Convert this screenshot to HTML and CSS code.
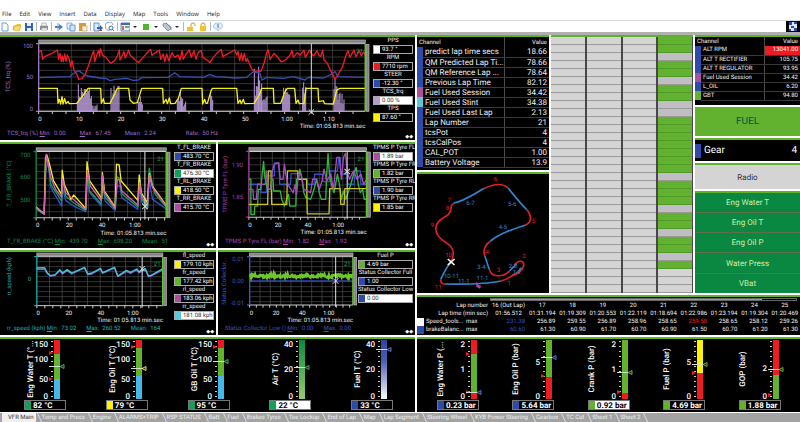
FILE: index.html
```html
<!DOCTYPE html>
<html lang="en">
<head>
    <meta charset="UTF-8">
    <meta name="viewport" content="width=device-width, initial-scale=1.0">
    <title>VFR Main</title>
    <link rel="stylesheet" href="styles.css">
</head>
<body>
    <nav class="menu">
        <a href="#">File</a><a href="#">Edit</a><a href="#">View</a><a href="#">Insert</a><a href="#">Data</a><a href="#">Display</a><a href="#">Map</a><a href="#">Tools</a><a href="#">Window</a><a href="#">Help</a>
    </nav>

    <div class="toolbar">
        <button aria-label="New"><svg viewBox="0 0 10 10"><path d="M2 1h4l2 2v6H2z" fill="#f4f9ff" stroke="#6f9fd8"/></svg></button>
        <button aria-label="Open"><svg viewBox="0 0 10 10"><path d="M1 8V4l3-1 1-1h4l-1 6z" fill="#f0c030"/><path d="M1 8l2-4h6L7 9z" fill="#f8e070" stroke="#c89820" stroke-width=".5"/></svg></button>
        <button aria-label="Save"><svg viewBox="0 0 10 10"><path d="M1 1h8v8H1z" fill="#2f62b8"/><path d="M3 1h4v3H3zM3 6h4v3H3z" fill="#e6effa"/></svg></button>
        <i class="sep"></i>
        <button aria-label="Print"><svg viewBox="0 0 10 10"><path d="M3 1h4l1 3H2z" fill="#eee" stroke="#999" stroke-width=".6"/><path d="M1 4h8v4H1z" fill="#8a8f98"/><path d="M3 6h5v3H2z" fill="#ddd"/></svg></button>
        <i class="sep"></i>
        <button aria-label="Cut"><svg viewBox="0 0 10 10"><path d="M1 4h4V2l4 3-4 3V6H1z" fill="#3f7ec4"/><path d="M4 1v8" stroke="#7b9cc0"/></svg></button>
        <button aria-label="Copy"><svg viewBox="0 0 10 10"><path d="M1 1h5v6H1z" fill="#e8f1fc" stroke="#6f9fd8" stroke-width=".8"/><path d="M4 3h5v6H4z" fill="#d4e6fa" stroke="#4f86c8" stroke-width=".8"/></svg></button>
        <button aria-label="Paste"><svg viewBox="0 0 10 10"><path d="M1 1h7v8H1z" fill="#dd9a38"/><path d="M4 4h5v5H4z" fill="#fff3dc" stroke="#a9742c" stroke-width=".5"/></svg></button>
        <i class="sep"></i>
        <button aria-label="Export"><svg viewBox="0 0 10 10"><path d="M1 1h5v8H1z" fill="#dceafa" stroke="#3f74b8" stroke-width=".8"/><path d="M4 5h3V3l3 3-3 3V7H4z" fill="#2b5fae"/><path d="M6 8h3v1H6z" fill="#d33"/></svg></button>
        <button aria-label="Find"><svg viewBox="0 0 10 10"><path d="M8 3A4 4 0 1 0 5 8" fill="none" stroke="#6d9bcd"/><circle cx="6" cy="6" r="2" fill="#fff" stroke="#3d6cb0"/><path d="M7 7l2 2" stroke="#3d6cb0"/></svg></button>
        <i class="sep"></i>
        <button aria-label="Layout"><svg viewBox="0 0 10 10"><path d="M1 1h9v8H1z" fill="#e8eefc" stroke="#4866a8" stroke-width=".8"/><path d="M1 1h9v2H1z" fill="#4866a8"/><path d="M2 4h2v4H2z" fill="#d86a4a"/><path d="M5 4h4v2H5z" fill="#72b35a"/></svg></button>
        <span class="caret"></span>
        <button aria-label="Colour"><svg viewBox="0 0 10 10"><path d="M2 2h6v6H2z" fill="#4db82a"/></svg></button>
        <span class="caret"></span>
        <button aria-label="Tags"><svg viewBox="0 0 10 10"><path d="M1 2l3-1 5 5-3 3-5-5z" fill="#b9c6d8" stroke="#5f7492" stroke-width=".7"/><path d="M4 1l5 4v3" fill="none" stroke="#5f7492" stroke-width=".7"/></svg></button>
        <span class="caret"></span>
        <i class="sep"></i>
        <button aria-label="Unlock"><svg viewBox="0 0 10 10"><path d="M5 5V3a2 2 0 0 1 4 0v1" fill="none" stroke="#c89a20"/><path d="M1 5h6v4H1z" fill="#f2c22e"/></svg></button>
        <button aria-label="Lock"><svg viewBox="0 0 10 10"><path d="M3 5V3a2 2 0 0 1 4 0v2" fill="none" stroke="#c89a20"/><path d="M2 4h6v5H2z" fill="#f2c22e"/></svg></button>
        <i class="sep"></i>
        <button aria-label="About"><svg viewBox="0 0 10 10"><path d="M5 1a4 3 0 0 1 1 6L5 9 4 7a4 3 0 0 1 1-6z" fill="#dff0fb" stroke="#8cb8d8" stroke-width=".7"/><path d="M5 2v4" stroke="#2f72b8"/></svg></button>
        <button class="tiles" aria-label="Tiles"><svg viewBox="0 0 14 11"><path d="M3 1h8v9H3z" fill="#dde4f8"/><path d="M3 1h3v3H3zM8 1h3v2H8zM5 5h3v2H5zM8 7h3v3H8zM3 8h2v2H3z" fill="#2d48a8"/></svg></button>
    </div>

    <main class="workspace">
        <div class="left">
            <section class="panel chart">
                <svg id="chart-tcs"></svg>
                <div class="stats spread purple"><span>TCS_trq (%) <u>M</u>in:&nbsp; 0.00</span><span><u>M</u>ax:&nbsp; 67.45</span><span>Mean:&nbsp; 2.24</span><span class="rate">Rate:&nbsp; 50 Hz</span></div>
                <div class="legend">
                    <div>PPS</div><p><i class="white"></i>93.7 °</p>
                    <div>RPM</div><p><i class="red"></i>7710 rpm</p>
                    <div>STEER</div><p><i class="blue"></i>-12.30 °</p>
                    <div>TCS_trq</div><p class="on"><i class="lilac"></i>0.00 %</p>
                    <div>TPS</div><p><i class="yellow"></i>87.60 °</p>
                </div>
            </section>
            <div class="pair">
                <section class="panel chart">
                    <svg id="chart-brake"></svg>
                    <div class="stats green-text"><span>T_FR_BRAKE (°C) <u>M</u>in:&nbsp; 439.70</span><span><u>M</u>ax:&nbsp; 698.20</span><span>Mean:&nbsp; 51</span></div>
                    <div class="legend">
                        <div>T_FL_BRAKE</div><p><i class="blue"></i>483.70 °C</p>
                        <div>T_FR_BRAKE</div><p class="on"><i class="emerald"></i>476.30 °C</p>
                        <div>T_RL_BRAKE</div><p><i class="yellow"></i>418.50 °C</p>
                        <div>T_RR_BRAKE</div><p><i class="magenta"></i>415.70 °C</p>
                    </div>
                </section>
                <section class="panel chart">
                    <svg id="chart-tpms"></svg>
                    <div class="stats magenta-text"><span>TPMS P Tyre FL (bar) <u>M</u>in:&nbsp; 1.82</span><span><u>M</u>ax:&nbsp; 1.92</span></div>
                    <div class="legend">
                        <div>TPMS P Tyre FL</div><p class="on"><i class="magenta"></i>1.89 bar</p>
                        <div>TPMS P Tyre FR</div><p><i class="green"></i>1.82 bar</p>
                        <div>TPMS P Tyre RL</div><p><i class="blue"></i>1.90 bar</p>
                        <div>TPMS P Tyre RR</div><p><i class="yellow"></i>1.85 bar</p>
                    </div>
                </section>
            </div>
            <div class="pair">
                <section class="panel chart">
                    <svg id="chart-speed"></svg>
                    <div class="stats cyan-text"><span>rr_speed (kph) <u>M</u>in:&nbsp; 73.02</span><span><u>M</u>ax:&nbsp; 260.52</span><span>Mean:&nbsp; 164</span></div>
                    <div class="legend">
                        <div>fl_speed</div><p><i class="yellow"></i>179.10 kph</p>
                        <div>fr_speed</div><p><i class="green"></i>177.42 kph</p>
                        <div>rl_speed</div><p><i class="magenta"></i>183.06 kph</p>
                        <div>rr_speed</div><p class="on"><i class="cyan"></i>181.08 kph</p>
                    </div>
                </section>
                <section class="panel chart wide">
                    <svg id="chart-status"></svg>
                    <div class="stats blue-text"><span>Status Collector Low () <u>M</u>in:&nbsp; 0.00</span><span><u>M</u>ax:&nbsp; 0.00</span></div>
                    <div class="legend">
                        <div>Fuel P</div><p><i class="green"></i>4.69 bar</p>
                        <div>Status Collector Full</div><p><i class="blue"></i>1.00</p>
                        <div>Status Collector Low</div><p class="on"><i class="blue"></i>0.00</p>
                    </div>
                </section>
            </div>
            <section class="panel gauges" id="gauges-temp"></section>
        </div>

        <div class="right">
            <div class="upper">
                <div class="col-a">
                    <section class="panel">
                        <table class="channels large">
                            <colgroup><col class="c-color"><col><col class="c-value"></colgroup>
                            <thead><tr><th colspan="2">Channel</th><th>Value</th></tr></thead>
                            <tbody>
                                <tr><td class="blue"></td><td>predict lap time secs</td><td>18.66</td></tr>
                                <tr><td class="blue"></td><td>QM Predicted Lap Ti...</td><td>78.66</td></tr>
                                <tr><td class="blue"></td><td>QM Reference Lap ...</td><td>78.64</td></tr>
                                <tr><td class="blue"></td><td>Previous Lap Time</td><td>82.12</td></tr>
                                <tr><td class="magenta"></td><td>Fuel Used Session</td><td>34.42</td></tr>
                                <tr><td class="cyan"></td><td>Fuel Used Stint</td><td>34.38</td></tr>
                                <tr><td class="blue"></td><td>Fuel Used Last Lap</td><td>2.13</td></tr>
                                <tr><td class="blue"></td><td>Lap Number</td><td>21</td></tr>
                                <tr><td class="blue"></td><td>tcsPot</td><td>4</td></tr>
                                <tr><td class="blue"></td><td>tcsCalPos</td><td>4</td></tr>
                                <tr><td class="blue"></td><td>CAL_POT</td><td>1.00</td></tr>
                                <tr><td class="blue"></td><td>Battery Voltage</td><td>13.9</td></tr>
                            </tbody>
                        </table>
                    </section>
                    <section class="panel">
                        <svg class="track" viewBox="22 28 393 357">
                            <g class="straight">
                                <path d="M131 115C165 108 190 88 223 71"/>
                                <path d="M294 70C312 93 330 115 349 134"/>
                                <path d="M347 181C310 193 270 205 241 229"/>
                                <path d="M224 274C230 290 232 302 238 315"/>
                                <path d="M298 319C308 310 314 302 320 296"/>
                                <path d="M306 331C318 328 328 320 333 309"/>
                                <path d="M272 349C220 360 160 359 104 358"/>
                                <path d="M92 344C100 325 110 307 122 292"/>
                            </g>
                            <g class="corner">
                                <path d="M223 71C250 58 275 53 294 70"/>
                                <path d="M349 134C364 152 366 172 347 181"/>
                                <path d="M241 229C222 242 218 256 224 274"/>
                                <path d="M238 315C244 337 275 340 298 319"/>
                                <path d="M312 302C325 284 345 287 340 304C337 314 328 326 306 333C296 338 288 346 272 349"/>
                                <path d="M104 358C94 358 90 352 92 344"/>
                                <path d="M122 292C134 270 132 248 108 234C85 220 76 205 77 190C79 168 98 160 110 153C124 145 122 130 124 122L131 115"/>
                            </g>
                            <path class="cross" d="M113 283l20 18M133 283l-20 18"/>
                            <path d="M197 350l8 10 8 4-4 8-10-6z" fill="#b040b0"/>
                            <g class="num">
                                <text x="256" y="50">6</text><text x="117" y="112">7</text><text x="112" y="135">8</text><text x="67" y="186">9</text><text x="115" y="277">10</text><text x="84" y="373">11</text><text x="370" y="176">5</text><text x="231" y="268">4</text><text x="265" y="323">3</text><text x="341" y="281">2</text><text x="296" y="361">1</text>
                            </g>
                            <g class="seg">
                                <text x="181" y="121">6-7</text><text x="306" y="123">5-6</text><text x="278" y="192">4-5</text><text x="214" y="312">3-4</text><text x="308" y="309">2-3</text><text x="320" y="327">1-2</text><text x="124" y="341">10-11</text><text x="161" y="355">11-1</text><text x="217" y="346">11-1</text>
                            </g>
                        </svg>
                    </section>
                </div>

                <section class="panel shifts" id="shifts"></section>

                <div class="col-c">
                    <section class="panel">
                        <table class="channels small">
                            <colgroup><col class="c-color"><col><col class="c-value"></colgroup>
                            <thead><tr><th colspan="2">Channel</th><th>Value</th></tr></thead>
                            <tbody>
                                <tr><td class="blue"></td><td>ALT RPM</td><td class="alarm">13041.00</td></tr>
                                <tr><td class="blue"></td><td>ALT T RECTIFIER</td><td>105.75</td></tr>
                                <tr><td class="blue"></td><td>ALT T REGULATOR</td><td>93.95</td></tr>
                                <tr><td class="magenta"></td><td>Fuel Used Session</td><td>34.42</td></tr>
                                <tr><td class="blue"></td><td>L_OIL</td><td>6.20</td></tr>
                                <tr><td class="green"></td><td>GBT</td><td>94.80</td></tr>
                            </tbody>
                        </table>
                    </section>
                    <div class="fuel">FUEL</div>
                    <section class="panel gear"><i class="blue"></i><span>Gear</span><span>4</span></section>
                    <section class="panel radio">Radio</section>
                    <section class="panel status">
                        <div>Eng Water T</div>
                        <div>Eng Oil T</div>
                        <div>Eng Oil P</div>
                        <div>Water Press</div>
                        <div>VBat</div>
                    </section>
                </div>
            </div>

            <section class="panel laps">
                <div class="scroll"><i></i></div>
                <table>
                    <colgroup><col class="c-swatch"><col class="c-name"><col class="c-stat"><col class="c-first"><col span="9"></colgroup>
                    <tr><th colspan="3">Lap number</th><td>16 (Out Lap)</td><td>17</td><td>18</td><td>19</td><td>20</td><td>21</td><td>22</td><td>23</td><td>24</td><td>25</td></tr>
                    <tr><th colspan="3">Lap time (min sec)</th><td>01:56.512</td><td>01:31.194</td><td>01:19.309</td><td>01:20.553</td><td>01:22.119</td><td>01:18.694</td><td>01:22.986</td><td>01:23.194</td><td>01:19.304</td><td>01:20.469</td></tr>
                    <tr class="val"><td class="white"></td><td>Speed_tools...</td><td>max</td><td class="low">231.38</td><td>256.89</td><td>259.55</td><td>256.89</td><td>258.96</td><td>258.65</td><td class="high">259.58</td><td>258.65</td><td>258.12</td><td>259.26</td></tr>
                    <tr class="val"><td class="blue"></td><td>brakeBalanc...</td><td>max</td><td class="low">60.60</td><td>61.30</td><td>60.90</td><td>61.70</td><td>60.70</td><td>60.90</td><td>61.50</td><td>60.70</td><td>61.20</td><td>61.30</td></tr>
                </table>
            </section>
            <section class="panel gauges press" id="gauges-press"></section>
        </div>
    </main>

    <nav class="tabs">
        <a href="#" class="active">VFR Main</a><a href="#">Temp and Press</a><a href="#">Engine</a><a href="#">ALARMS+TRIP</a><a href="#">RSP STATUS</a><a href="#">Batt</a><a href="#">Fuel</a><a href="#">Brakes Tyres</a><a href="#">Tee Lockup</a><a href="#">End of Lap</a><a href="#">Map</a><a href="#">Lap Segment</a><a href="#">Steering Wheel</a><a href="#">KYB Power Steering</a><a href="#">Gearbox</a><a href="#">TC Cut</a><a href="#">Sheet 1</a><a href="#">Sheet 2</a>
    </nav>

    <script src="script.js"></script>
</body>
</html>
```
FILE: styles.css
```css
* {
    box-sizing: border-box;
}
body {
    font-family: Roboto, "Liberation Sans", sans-serif;
    font-size: 6px;
    text-rendering: geometricPrecision;
    margin: 0;
    height: 100vh;
    display: flex;
    flex-direction: column;
    background: white;
    color: #f0f0f0;
}
a {
    color: inherit;
    text-decoration: none;
}
svg {
    display: block;
}

/* swatch colours */
.white { background: white; }
.red { background: #ed1c24; }
.blue { background: #2d4ba8; }
.lilac { background: #b79bd0; }
.yellow { background: #fff200; }
.emerald { background: #12a05a; }
.green { background: #62b22f; }
.magenta { background: #a8509f; }
.cyan { background: #5cc8dc; }

/* menu and toolbar */
.menu {
    display: flex;
    gap: 8px;
    padding: 10px 2px 0;
    height: 20px;
    line-height: 9px;
    font-family: "Open Sans", "Noto Sans", sans-serif;
    color: #222;
}
.toolbar {
    display: flex;
    align-items: center;
    gap: 2px;
    height: 15px;
    border-top: 1px solid #d5dada;
    border-bottom: 3px solid #b0b0b0;
}
.toolbar button {
    width: 10px;
    height: 10px;
    padding: 0;
    border: none;
    background: none;
    cursor: pointer;
}
.toolbar .tiles {
    width: 14px;
    height: 11px;
    margin-left: auto;
    background: black;
}
.sep {
    width: 1px;
    height: 9px;
    background: #b5b5b5;
}
.caret {
    border: 2px solid transparent;
    border-top-color: #222;
    margin: 2px 2px 0 1px;
}

/* workspace */
.workspace {
    flex: 1;
    display: grid;
    grid-template-columns: 415fr 383fr;
    grid-template-rows: minmax(0, 1fr);
    gap: 2px;
    min-height: 0;
}
.left, .right, .upper, .col-a, .col-c, .pair {
    display: grid;
    gap: 2px;
    min-width: 0;
    min-height: 0;
}
.left {
    grid-template-rows: 105fr 106fr 85fr 75fr;
}
.right {
    grid-template-rows: 258fr 40fr 75fr;
}
.pair {
    grid-template-columns: 216fr 197fr;
    grid-template-rows: minmax(0, 1fr);
}
.upper {
    grid-template-columns: 132fr 142fr 105fr;
    grid-template-rows: minmax(0, 1fr);
}
.col-a {
    grid-template-rows: 135fr 121fr;
}
.col-c {
    grid-template-rows: 70fr 29fr 23fr 25fr 102fr;
}
.panel {
    background: black;
    border-top: 2px solid #5fb22c;
    min-width: 0;
    min-height: 0;
    overflow: hidden;
}

/* charts */
.chart {
    display: grid;
    grid-template-columns: minmax(0, 1fr) 42px;
    grid-template-rows: minmax(0, 1fr) 10px;
}
.chart.wide {
    grid-template-columns: minmax(0, 1fr) 57px;
}
.chart svg {
    width: 100%;
    height: 100%;
}
.stats {
    grid-column: 1;
    grid-row: 2;
    display: flex;
    gap: 10px;
    padding-left: 7px;
    line-height: 8px;
    white-space: nowrap;
}
.spread {
    gap: 14px;
}
.rate {
    margin-left: 16px;
}
.purple { color: #9a6cc8; }
.green-text { color: #0f8a4c; }
.magenta-text { color: #b045a8; }
.cyan-text { color: #18b4b4; }
.blue-text { color: #3f54bc; }
.legend {
    grid-column: 2;
    grid-row: 1 / 3;
    display: flex;
    flex-direction: column;
    padding: 0 2px 0 0;
    text-align: center;
    line-height: 8px;
    white-space: nowrap;
}
.legend::after {
    content: "◆◆";
    margin-top: auto;
    text-align: right;
    font-size: 5px;
    line-height: 6px;
    color: white;
}
.legend p {
    display: flex;
    margin: 0;
    height: 9px;
    border: 1px solid #aaa;
    line-height: 8px;
    color: white;
}
.legend p i {
    width: 6px;
    margin-right: 2px;
}
.legend .on {
    background: white;
    color: #333;
}
.grid-line { stroke: #505050; stroke-width: 2; }
.frame { fill: none; stroke: #ccc; stroke-width: 3; }
.bar { fill: #808080; stroke: #bbb; stroke-width: 2; }
.series { fill: none; stroke-width: 4; stroke-linejoin: round; }
.cursor { stroke: #ddd; stroke-width: 3; fill: none; }
.edge { stroke: #5fc22c; stroke-width: 5; }
.chart text, .track text {
    font-size: 18px;
}
.axis-x, .time { fill: #f0f0f0; }
.axis-x, .title { text-anchor: middle; }
.axis-y, .time { text-anchor: end; }
.lap { fill: #10a050; text-anchor: middle; }

/* channel tables */
.channels {
    width: 100%;
    border-collapse: collapse;
    table-layout: fixed;
    white-space: nowrap;
}
.c-color { width: 6px; }
.c-value { width: 34%; }
.channels th {
    padding: 0 2px;
    font-weight: normal;
    text-align: left;
}
.channels td {
    padding: 0 2px;
    border-bottom: 1px solid #3a3a3a;
}
.channels td:first-child {
    padding: 0;
    border-bottom: none;
}
.channels th:last-child, .channels td:last-child {
    text-align: right;
    border-left: 1px solid #4a4a4a;
}
.channels tr { height: 9px; line-height: 8px; }
.large tr { height: 10px; line-height: 9px; }
.large td { font-size: 8px; }
.channels .alarm {
    background: #ed1c24;
    color: white;
}

/* track map */
.track {
    width: 100%;
    height: 100%;
}
.straight path, .corner path, .cross {
    fill: none;
    stroke-width: 5;
}
.straight path { stroke: #2f86d0; }
.corner path { stroke: #e01f26; }
.cross { stroke: white; }
.num, .seg { text-anchor: middle; }
.num { fill: #e01f26; }
.seg { fill: #2f86d0; }

/* shift light columns */
.shifts {
    display: grid;
    grid-template-columns: repeat(4, 1fr);
    gap: 2px;
    padding-right: 1px;
    background: #484848;
}
.shifts div {
    display: grid;
    grid-auto-rows: 1fr;
}
.shifts i {
    background: #d4d4d4;
    border-bottom: 1px solid #9a9a9a;
}
.shifts .lit {
    background: #62b22f;
    border-color: #4f9a2a;
}
.shifts .dim {
    background: #c0bec3;
}

/* right-hand buttons */
.fuel, .radio, .status div {
    display: flex;
    align-items: center;
    justify-content: center;
}
.fuel {
    background: #62b22f;
    color: #04563a;
    font-size: 10px;
}
.gear {
    display: flex;
    align-items: center;
    font-size: 10px;
    color: white;
    padding-right: 3px;
}
.gear i {
    width: 6px;
    height: 14px;
    margin-right: 3px;
}
.gear span:last-child {
    margin-left: auto;
}
.radio {
    background: #d4d4d4;
    color: #333;
    font-size: 8px;
}
.status {
    display: grid;
    grid-auto-rows: 1fr;
    gap: 1px;
    background: #5d7048;
    font-size: 8px;
    color: #d2f0a8;
}
.status div {
    background: #0a8740;
}

/* lap table */
.scroll {
    margin: 1px 3px 1px 73px;
    height: 3px;
    border: 1px solid #666;
}
.scroll i {
    display: block;
    width: 89%;
    height: 1px;
    background: #999;
}
.laps table {
    width: 100%;
    table-layout: fixed;
    border-collapse: collapse;
    white-space: nowrap;
}
.laps tr { height: 8px; line-height: 8px; }
.laps th, .laps td {
    padding: 0;
    font-weight: normal;
    text-align: center;
}
.laps th {
    text-align: right;
    padding-right: 2px;
}
.laps .val td { text-align: right; padding-right: 2px; }
.laps .val td:nth-child(2) { text-align: left; padding-left: 2px; }
.laps .val td:nth-child(3) { text-align: left; }
.laps .val .low { color: #3c4cae; }
.laps .val .high { color: #ed1c24; }
.c-swatch { width: 7px; }
.c-name { width: 42px; }
.c-stat { width: 24px; }
.c-first { width: 37px; }

/* gauges */
.gauges {
    display: flex;
    padding-right: 6px;
}
.gauge {
    flex: 1;
    min-width: 0;
    display: flex;
    flex-direction: column;
}
.gauge svg {
    width: 100%;
    flex: 1;
    min-height: 0;
    font-size: 8px;
    font-weight: 500;
}
.gauge text { fill: white; }
.gauge .tick { stroke: #ccc; }
.gauge .limit { fill: #ed1c24; }
.reading {
    display: flex;
    width: 42px;
    height: 10px;
    margin: 0 0 2px 24px;
    border: 1px solid #777;
    font-size: 8px;
    font-weight: 700;
    line-height: 9px;
    color: white;
    white-space: nowrap;
}
.reading i {
    width: 6px;
    margin-right: 2px;
}
.reading.on {
    background: white;
    color: black;
}
.press .reading { margin-left: 20px; }

/* sheet tabs */
.tabs {
    display: flex;
    height: 9px;
    margin-top: 1px;
    padding-left: 2px;
    background: #a3a3a3;
    line-height: 9px;
    color: #f0f0f0;
    white-space: nowrap;
    overflow: hidden;
}
.tabs a {
    padding: 0 7px 0 6px;
}
.tabs a::after {
    content: "";
    display: inline-block;
    height: 9px;
    margin-right: -6px;
    border-right: 1px solid #ddd;
    transform: translateX(5px) skewX(25deg);
    vertical-align: top;
}
.tabs .active {
    background: #f0f0f0;
    color: #333;
}
```
FILE: script.js
```js
// Seeded noise so that every load draws the same traces
let seed = 7;
function rand() {
    seed = (seed * 16807) % 2147483647;
    return seed / 2147483647;
}

function line(points, color) {
    return `<polyline class="series" points="${points}" stroke="${color}"/>`;
}

function drawChart(id, c) {
    const [l, t, r, b] = c.plot;
    let s = '';
    for (let x = l + c.grid[0]; x < r; x += c.grid[0]) {
        s += `<line class="grid-line" x1="${x}" x2="${x}" y1="${t}" y2="${b}"/>`;
    }
    for (let y = t + c.grid[1]; y < b; y += c.grid[1]) {
        s += `<line class="grid-line" x1="${l}" x2="${r}" y1="${y}" y2="${y}"/>`;
    }
    s += `<rect class="bar" x="${l}" y="${t - 11}" width="${r - l}" height="8"/>`;
    s += `<rect class="bar" x="${r + 3}" y="${t + 2}" width="8" height="${b - t - 2}"/>`;
    s += `<path class="frame" d="M${l} ${t}H${r}M${l} ${b}H${r}"/>`;
    s += `<path d="M${l - 8} ${t}H${l}V${b}H${l - 8}" fill="none" stroke="${c.color}" stroke-width="4"/>`;
    for (let x = l; x <= r; x += c.tick) {
        s += `<line class="frame" x1="${x}" x2="${x}" y1="${b}" y2="${b + 8}"/>`;
    }
    s += c.series;
    s += `<line class="edge" x1="${r}" x2="${r}" y1="${t}" y2="${b}"/>`;
    s += `<line class="cursor" x1="${c.cursor[0]}" x2="${c.cursor[0]}" y1="${t}" y2="${b + 6}"/>`;
    s += `<path class="cursor" d="M${c.cursor[0] - 8} ${c.cursor[1] - 8}l16 16m0 -16l-16 16"/>`;
    c.x.forEach(([text, x]) => s += `<text class="axis-x" x="${x}" y="${b + 29}">${text}</text>`);
    c.y.forEach(([text, y]) => s += `<text class="axis-y" x="${l - 17}" y="${y + 6}" fill="${c.color}">${text}</text>`);
    s += `<text class="title" transform="translate(${c.title[1]} ${c.title[2]}) rotate(-90)" fill="${c.color}">${c.title[0]}</text>`;
    s += `<text class="time" x="${r}" y="${b + 50}">Time: 01:05.813 min.sec</text>`;
    s += `<text class="lap" x="${r - 17}" y="${t + 28}">21</text>`;
    const svg = document.getElementById(id);
    svg.setAttribute('viewBox', c.view);
    svg.innerHTML = s;
}

// TCS activity: [from, to, height]
let spikes = '';
[[232, 250, 85], [250, 276, 80], [276, 292, 20], [333, 360, 80], [415, 428, 50], [532, 545, 60], [545, 558, 40], [632, 640, 75],
 [763, 776, 135], [776, 786, 140], [786, 804, 60], [848, 872, 75], [908, 918, 90], [1002, 1014, 138], [1014, 1034, 60]].forEach(([from, to, h]) => {
    for (let x = from; x < to; x += 3) {
        const y = 333 - h * (0.3 + 0.7 * rand());
        spikes += `M${x} 334V${y.toFixed(0)}`;
    }
});

drawChart('chart-tcs', {
    view: '0 111 1119 279', plot: [116, 131, 1096, 334], grid: [98, 20], tick: 41, color: '#9a78c0', cursor: [934, 336],
    x: [['0', 120], ['10', 238], ['20', 363], ['30', 487], ['40', 612], ['50', 736], ['1.00', 861], ['1.10', 986]],
    y: [['100', 138], ['50', 232], ['0', 327]],
    title: ['TCS_trq (%)', 30, 230],
    series:
        `<path d="${spikes}" stroke="#b79bd8" stroke-width="3"/>` +
        line('116,233 210,230 218,222 236,212 250,222 262,228 300,234 320,236 330,242 345,238 380,235 400,241 415,240 425,233 505,232 524,218 540,230 610,232 630,223 645,230 710,234 740,232 760,215 780,220 786,240 800,232 850,235 880,230 905,237 915,240 925,232 970,234 990,225 1005,215 1015,230 1096,232', '#3450b0') +
        line('116,265 172,265 174,310 178,298 182,312 186,290 189,312 194,296 198,311 204,304 208,311 230,310 250,285 264,265 302,265 304,310 310,296 313,310 330,310 345,280 352,265 386,265 390,300 400,310 412,308 425,265 488,265 490,310 498,298 502,311 508,294 512,311 525,310 535,295 544,265 606,265 608,312 614,298 618,310 622,310 634,270 637,265 710,265 714,310 720,300 724,311 730,298 734,311 762,310 778,285 785,265 820,265 822,310 842,310 855,275 862,265 884,265 888,310 894,300 898,311 912,310 918,265 954,265 956,305 970,302 974,311 1000,312 1010,270 1020,265 1096,265', '#f4ee1c') +
        line('116,157 124,152 128,178 134,170 160,158 172,150 176,178 180,160 184,185 187,168 190,185 194,162 198,184 202,165 208,178 212,200 216,182 222,210 230,222 236,238 246,236 256,222 266,195 276,165 281,152 284,185 292,160 296,152 299,168 301,146 308,166 318,172 332,190 344,182 352,168 358,150 360,180 372,155 376,174 386,150 390,165 406,180 416,188 424,178 440,160 452,148 456,166 464,160 478,150 482,178 490,162 494,185 500,162 506,182 516,158 524,172 534,165 540,180 546,152 550,178 556,165 568,150 574,172 582,152 588,178 594,158 604,152 608,172 618,178 630,188 640,172 650,160 664,148 668,170 704,150 710,165 714,155 719,182 724,160 728,182 733,160 738,184 742,176 748,190 754,205 764,216 774,212 782,215 792,190 800,158 805,150 810,178 822,160 832,170 844,186 856,180 868,168 876,152 880,172 892,158 900,165 912,150 916,172 928,150 940,168 952,152 956,165 962,170 968,150 972,180 982,190 992,212 1005,238 1015,222 1028,200 1038,165 1044,152 1050,172 1062,150 1068,170 1078,152 1084,168 1090,156 1096,165', '#ee1c24')
});

drawChart('chart-brake', {
    view: '0 20 520 280', plot: [108, 42, 497, 240], grid: [39, 20], tick: 24, color: '#0f8a4c', cursor: [433, 206],
    x: [['0', 113], ['20', 207], ['40', 305], ['1:00', 403]],
    y: [['700', 53], ['600', 118], ['500', 188]],
    title: ['T_FR_BRAKE (°C)', 32, 138],
    series:
        line('108,215 132,229 137,100 144,72 152,150 184,205 187,150 196,188 220,205 256,222 261,120 268,165 302,205 306,135 314,190 344,218 350,145 358,145 364,180 412,215 417,150 424,195 441,214 446,128 456,185 497,214', '#2f55c8') +
        line('108,212 132,229 137,55 144,72 152,140 184,190 187,110 196,175 220,195 256,218 261,110 268,160 302,198 306,115 314,178 344,214 350,118 358,122 364,168 412,208 417,120 424,185 441,210 446,92 456,140 464,170 497,208', '#12a05a') +
        line('108,208 132,228 136,60 140,52 148,80 160,130 184,170 186,98 192,140 212,185 220,172 256,212 260,72 268,130 304,182 306,105 312,160 344,208 348,80 356,82 362,130 412,188 416,112 422,165 440,195 446,108 455,145 497,203', '#f6ec20') +
        line('108,208 132,229 138,50 143,75 152,120 166,155 184,178 187,125 196,165 256,216 261,98 270,145 302,188 306,112 312,165 344,212 350,128 356,125 364,160 412,202 417,135 424,178 441,205 446,112 456,150 497,205', '#d860b0')
});

drawChart('chart-tpms', {
    view: '24 20 462 280', plot: [116, 42, 467, 238], grid: [35, 20], tick: 22, color: '#a83fa2', cursor: [409, 102],
    x: [['0', 119], ['20', 203], ['40', 292], ['1:00', 382]],
    y: [['1.90', 83], ['1.85', 178]],
    title: ['TPMS P Tyre FL (bar)', 50, 140],
    series:
        line('116,140 150,140 152,165 168,165 170,115 192,115 192,76 206,76 208,140 240,140 242,108 262,108 266,125 290,125 292,140 310,140 312,110 335,110 337,132 356,132 358,100 380,100 384,60 388,60 390,110 409,110 411,140 430,140 432,100 448,100 450,140 467,140', '#3450c0') +
        line('116,125 122,125 122,230 132,230 134,205 142,205 144,155 152,155 155,115 160,72 163,115 168,140 172,155 180,155 184,125 188,125 190,160 210,160 214,185 222,205 228,185 234,170 238,205 256,205 258,125 264,125 268,95 274,125 280,165 286,180 300,185 310,155 318,125 326,165 332,185 345,185 348,110 352,48 356,110 362,140 370,165 380,110 386,140 392,185 398,160 405,185 420,140 428,110 436,90 442,140 448,165 455,155 460,185 467,185', '#2fb838') +
        line('116,200 172,200 174,100 182,100 184,200 229,200 231,100 262,100 262,125 288,125 290,228 355,228 357,153 388,153 390,200 400,200 402,153 467,153', '#c8c420') +
        line('116,155 128,155 130,185 138,185 142,140 165,140 168,100 174,155 182,155 186,100 192,80 204,76 210,125 218,125 222,80 226,110 232,140 248,165 254,140 258,170 264,110 272,110 280,155 300,165 306,125 318,125 326,155 334,130 340,95 348,130 360,110 368,155 378,60 386,60 392,125 398,60 404,48 409,102 416,125 428,100 438,125 450,110 458,140 467,125', '#a050b8')
});

drawChart('chart-speed', {
    view: '0 24 519 219', plot: [109, 38, 487, 185], grid: [38, 15], tick: 24, color: '#18a8a8', cursor: [425, 74],
    x: [['0', 113], ['20', 205], ['40', 301], ['1:00', 397]],
    y: [['0', 105]],
    title: ['rr_speed (kph)', 30, 97],
    series:
        line('109,76 132,75 140,88 150,97 164,94 178,80 186,90 200,80 214,90 252,72 262,92 274,90 300,75 306,88 342,72 352,98 378,82 390,88 408,78 416,86 434,76 444,98 452,96 487,78', '#9858c0') +
        line('109,72 132,71 140,86 150,95 164,92 178,77 186,87 200,77 214,87 252,70 262,90 274,87 300,73 306,86 342,70 352,96 378,79 390,85 408,75 416,84 434,73 444,96 452,94 487,74', '#38c8e0')
});

let fuel = '';
for (let x = 121; x <= 431; x += 2) {
    fuel += `${x},${(96 + 2 * Math.sin(x / 8) + 8 * (rand() - 0.5)).toFixed(0)} `;
}
drawChart('chart-status', {
    view: '26 24 420 219', plot: [121, 38, 431, 183], grid: [31, 15], tick: 20, color: '#3f54bc', cursor: [379, 111],
    x: [['0', 126], ['20', 200], ['40', 279], ['1:00', 358]],
    y: [['0.01', 46], ['0.00', 111], ['-0.01', 177]],
    title: ['Status Collector...', 50, 112],
    series: line('121,111 431,111', '#2f45b0') + `<polyline points="${fuel}" fill="none" stroke="#6cc62c" stroke-width="8"/>`
});

// Shift light columns, 32 cells each
const dim = [2, 5, 8, 9, 17, 21, 24, 27];
let cols = '';
for (let c = 0; c < 4; c++) {
    cols += '<div>';
    for (let i = 0; i < 32; i++) {
        let cls = '';
        if (c === 3 && i < 29) cls = dim.includes(i) ? 'dim' : 'lit';
        cols += `<i class="${cls}"></i>`;
    }
    cols += '</div>';
}
document.getElementById('shifts').innerHTML = cols;

// Gauges: bands are [color, from, to] down the bar
const R = '#ed1c24', G = '#62b22f', B = '#45b8ea', Y = '#fff200';
const temps = [
    { name: 'Eng Water T (°...', bands: [[R, 1, 15], [G, 15, 40], [B, 40, 60]], labels: [['150', 5], ['100', 20], ['50', 40], ['0', 57]], limits: [14, 40], mark: 27, tint: '#3fae5a', value: '82 °C', swatch: 'emerald' },
    { name: 'Eng Oil T (°C)', bands: [[R, 1, 9], [G, 9, 37], [B, 37, 60]], labels: [['150', 5], ['100', 20], ['50', 40], ['0', 57]], limits: [8], mark: 29, tint: '#ffe030', value: '79 °C', swatch: 'yellow' },
    { name: 'GB Oil T (°C)', bands: [[R, 1, 9], [G, 9, 37], [B, 37, 60]], labels: [['150', 5], ['100', 20], ['50', 40], ['0', 57]], limits: [8], mark: 22, tint: '#3fae5a', value: '95 °C', swatch: 'emerald' },
    { name: 'Air T (°C)', bands: [['url(#fade-green)', 1, 60]], labels: [['40', 5], ['20', 30], ['0', 57]], limits: [], mark: 28, tint: '#3fae5a', value: '22 °C', swatch: 'emerald', on: true },
    { name: 'Fuel T (°C)', bands: [['url(#fade-blue)', 1, 60]], labels: [['40', 5], ['20', 30], ['0', 57]], limits: [], mark: 10, tint: '#5a6cc8', value: '33 °C', swatch: 'blue' }
];
const pressures = [
    { name: 'Eng Water P (...', bands: [[R, 1, 15], [G, 15, 54], [R, 54, 60]], labels: [['2', 5], ['1', 30], ['0', 57]], limits: [15, 53], mark: 53, tint: '#5a6cc8', value: '0.23 bar', swatch: 'blue' },
    { name: 'Eng Oil P (bar)', bands: [[G, 1, 38], [R, 38, 60]], labels: [['5', 23], ['0', 57]], limits: [37], mark: 18, tint: '#5a6cc8', value: '5.64 bar', swatch: 'blue' },
    { name: 'Crank P (bar)', bands: [[G, 1, 54], [R, 54, 60]], labels: [['2', 5], ['1', 30], ['0', 57]], limits: [53], mark: 33, tint: '#62b22f', value: '0.92 bar', swatch: 'green', on: true },
    { name: 'Fuel P (bar)', bands: [[Y, 1, 34], [R, 34, 60]], labels: [['5', 23], ['0', 57]], limits: [34], mark: 25, tint: '#62b22f', value: '4.69 bar', swatch: 'green' },
    { name: 'GOP (bar)', bands: [[R, 1, 36], [G, 36, 60]], labels: [['2', 29], ['0', 57]], limits: [56], mark: 30, tint: '#62b22f', value: '1.88 bar', swatch: 'green' }
];

function drawGauges(id, list, nameX) {
    document.getElementById(id).innerHTML = list.map(g => {
        let s = `<defs><linearGradient id="fade-green" x2="0" y2="1"><stop stop-color="#0a8a3c"/><stop offset="1" stop-color="#9acb70"/></linearGradient>
            <linearGradient id="fade-blue" x2="0" y2="1"><stop stop-color="#2d45a0"/><stop offset=".35" stop-color="#4a5cb0"/><stop offset="1" stop-color="#fff"/></linearGradient></defs>`;
        s += `<text text-anchor="middle" transform="translate(${nameX} 30) rotate(-90)">${g.name}</text>`;
        for (let y = 2; y < 60; y += 5) s += `<path class="tick" d="M51 ${y + .5}h2"/>`;
        g.bands.forEach(([color, from, to]) => s += `<rect x="54" y="${from}" width="6" height="${to - from}" fill="${color}"/>`);
        g.labels.forEach(([text, y]) => s += `<text text-anchor="end" x="48" y="${y + 3}">${text}</text>`);
        g.limits.forEach(y => s += `<path class="limit" d="M49 ${y - 2}l4 2-4 2z"/>`);
        s += `<path d="M49 ${g.mark + .5}h12" stroke="#cfe0cf"/><path d="M60 ${g.mark + .5}l4-2v4z" fill="#222" stroke="${g.tint}"/>`;
        return `<div class="gauge"><svg viewBox="0 0 75 61" preserveAspectRatio="xMinYMid meet">${s}</svg>
            <div class="reading ${g.on ? 'on' : ''}"><i class="${g.swatch}"></i>${g.value}</div></div>`;
    }).join('');
}
drawGauges('gauges-temp', temps, 33);
drawGauges('gauges-press', pressures, 26);
```
